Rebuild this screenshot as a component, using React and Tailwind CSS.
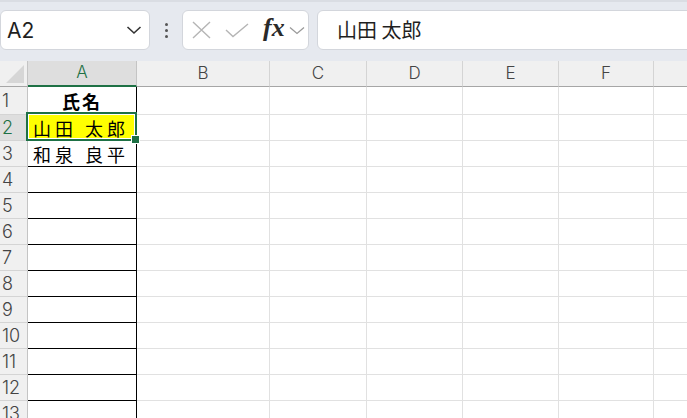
import React from "react";

const cols = [
  { l: "A", w: "w-[109px]" },
  { l: "B", w: "w-[133px]" },
  { l: "C", w: "w-[97px]" },
  { l: "D", w: "w-[96px]" },
  { l: "E", w: "w-[96px]" },
  { l: "F", w: "w-[95px]" },
  { l: "", w: "w-[120px]" },
];

const ui = { fontFamily: "Inter, 'Noto Sans', sans-serif" };
const jp = { fontFamily: "'Noto Sans CJK JP', sans-serif" };

function Cell({ ci, children, className = "" }) {
  const isA = ci === 0;
  return (
    <div
      className={`${cols[ci].w} shrink-0 h-full border-r border-b ${
        isA ? "border-black" : "border-[#e1e1e1]"
      } ${className}`}
    >
      {children}
    </div>
  );
}

export default function App() {
  const rows = Array.from({ length: 13 }, (_, i) => i + 1);
  return (
    <div className="w-[687px] h-[418px] overflow-hidden bg-white" style={ui}>
      {/* Top bar */}
      <div className="h-[61px] bg-[#e6e9ef] border-t-2 border-[#dadde3] pt-[8px] flex items-start overflow-hidden">
        <div className="w-[150px] h-[40px] shrink-0 bg-white border border-[#d3d6dc] rounded-[6px] flex items-center justify-between pl-[6px] pr-[6px]">
          <span className="text-[21px] text-[#1f1f1f] leading-none">A2</span>
          <svg width="16" height="10" viewBox="0 0 16 10" className="mr-[1px]">
            <polyline points="1.5,2 8,8 14.5,2" fill="none" stroke="#333" strokeWidth="1.6" />
          </svg>
        </div>
        <div className="w-[32px] h-[40px] shrink-0 flex flex-col items-center justify-center gap-[3px]">
          <div className="w-[3px] h-[3px] bg-[#555] rounded-full" />
          <div className="w-[3px] h-[3px] bg-[#555] rounded-full" />
          <div className="w-[3px] h-[3px] bg-[#555] rounded-full" />
        </div>
        <div className="w-[127px] h-[40px] shrink-0 bg-white border border-[#d3d6dc] rounded-[6px] flex items-center pl-[9px]">
          <svg width="19" height="18" viewBox="0 0 19 18">
            <path d="M1 1 L18 17 M18 1 L1 17" stroke="#b5b5b5" strokeWidth="1.4" fill="none" />
          </svg>
          <svg width="24" height="15" viewBox="0 0 24 15" className="ml-[14px]">
            <polyline points="1,7 8,13.5 23,1" fill="none" stroke="#b5b5b5" strokeWidth="1.4" />
          </svg>
          <span
            className="ml-[14px] text-[26px] italic font-bold text-[#2a2a2a] leading-none -mt-[4px]"
            style={{ fontFamily: "'Liberation Serif', 'DejaVu Serif', serif" }}
          >
            fx
          </span>
          <svg width="16" height="9" viewBox="0 0 16 9" className="ml-[4px]">
            <polyline points="1,1.5 8,7.5 15,1.5" fill="none" stroke="#9a9a9a" strokeWidth="1.3" />
          </svg>
        </div>
        <div className="w-[400px] h-[40px] shrink-0 ml-[8px] bg-white border border-[#d3d6dc] rounded-[6px] flex items-center pl-[19px]">
          <span className="text-[20px] text-[#1f1f1f] leading-none" style={jp}>
            山田 太郎
          </span>
        </div>
      </div>

      {/* Column headers */}
      <div className="flex h-[26px]">
        <div className="w-[28px] shrink-0 h-full bg-[#f0f0f0] border-r border-b border-r-[#c4c4c4] border-b-[#a6a6a6] flex items-end justify-end pr-[3px] pb-[3px]">
          <svg width="18" height="18" viewBox="0 0 18 18">
            <polygon points="18,0 18,18 0,18" fill="#d6d6d6" />
          </svg>
        </div>
        {cols.map((c, i) => (
          <div
            key={i}
            className={`${c.w} shrink-0 h-full flex items-center justify-center text-[17px] font-light ${
              i === 0
                ? "bg-[#dedede] text-[#1e7145] border-b-2 border-b-[#1e7145] border-r border-r-[#c4c4c4]"
                : "bg-[#f0f0f0] text-[#444] border-b border-b-[#a6a6a6] border-r border-r-[#d4d4d4]"
            }`}
          >
            {c.l}
          </div>
        ))}
      </div>

      {/* Rows */}
      {rows.map((r) => (
        <div key={r} className={`flex ${r === 1 ? "h-[28px]" : "h-[26px]"}`}>
          <div
            className={`w-[28px] shrink-0 h-full border-b border-b-[#d4d4d4] flex items-center pl-[2px] text-[18px] font-light leading-none ${
              r === 2
                ? "bg-[#dedede] text-[#1e7145] border-r-2 border-r-[#1e7145]"
                : "bg-[#f0f0f0] text-[#444] border-r border-r-[#c4c4c4]"
            }`}
          >
            {r}
          </div>
          {cols.map((c, ci) => {
            if (ci === 0 && r === 1)
              return (
                <Cell key={ci} ci={ci} className="flex items-center justify-center">
                  <span className="text-[18px] font-bold text-black leading-none tracking-[2px]" style={jp}>
                    氏名
                  </span>
                </Cell>
              );
            if (ci === 0 && r === 2)
              return (
                <Cell key={ci} ci={ci} className="relative bg-[#ffff00] flex items-center pl-[5px]">
                  <span className="text-[18px] text-black leading-none tracking-[4px]" style={jp}>
                    山田 太郎
                  </span>
                  <div className="absolute left-[-2px] top-[-3px] right-[-1px] bottom-[-1px] border-2 border-[#1e7145]">
                    <div className="absolute inset-0 border border-white" />
                  </div>
                  <div className="absolute right-[-3px] bottom-[-3px] w-[7px] h-[7px] bg-[#1e7145] outline outline-1 outline-white" />
                </Cell>
              );
            if (ci === 0 && r === 3)
              return (
                <Cell key={ci} ci={ci} className="flex items-center pl-[5px]">
                  <span className="text-[18px] text-black leading-none tracking-[4px]" style={jp}>
                    和泉 良平
                  </span>
                </Cell>
              );
            return <Cell key={ci} ci={ci} />;
          })}
        </div>
      ))}
    </div>
  );
}
